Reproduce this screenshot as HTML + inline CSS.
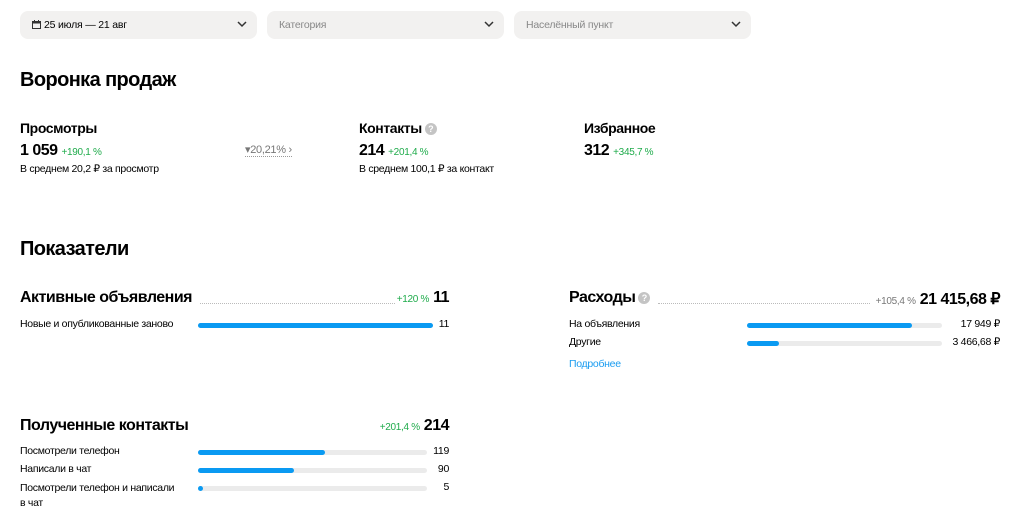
<!DOCTYPE html>
<html><head><meta charset="utf-8"><style>
body{margin:0;width:1010px;height:516px;background:#fff;position:relative;overflow:hidden;font-family:"Liberation Sans Narrow","Liberation Sans",sans-serif;color:#000}
.a{position:absolute;white-space:nowrap}
.dd{position:absolute;top:11px;height:28px;width:237px;background:#f2f1f0;border-radius:8px;font-size:10.5px;line-height:28px;letter-spacing:-0.2px}
.dd span{position:absolute;left:12px}
.dd svg.c{position:absolute;right:10px;top:10px}
.h1{font-size:20px;font-weight:bold;letter-spacing:-0.6px}
.h3{font-size:14px;font-weight:bold;letter-spacing:-0.4px}
.big{font-size:16px;font-weight:bold;letter-spacing:-0.5px}
.g{color:#1fab4b;font-size:10px;font-weight:normal;letter-spacing:-0.3px}
.s{font-size:10.5px;letter-spacing:-0.3px}
.bar{position:absolute;height:5px;background:#ebebeb;border-radius:3px}
.bar i{position:absolute;left:0;top:0;height:5px;background:#0a9af2;border-radius:3px}
.dot{position:absolute;border-bottom:1px dotted #bbb;height:0}
.q{display:inline-block;width:12px;height:12px;border-radius:50%;background:#c4c4c4;color:#fff;font-size:9px;text-align:center;line-height:12px;vertical-align:1px;margin-left:3px;letter-spacing:0}
.r{text-align:right}
</style></head><body>
<div class="dd" style="left:20px"><span><svg width="9" height="9" viewBox="0 0 9 9" style="vertical-align:-1px;margin-right:3px"><rect x="0.5" y="1.5" width="8" height="7" fill="none" stroke="#333"/><rect x="0.5" y="1.5" width="8" height="2" fill="#333"/><path d="M2.5 0v2M6.5 0v2" stroke="#333"/></svg>25 июля — 21 авг</span><svg class="c" width="10" height="7" viewBox="0 0 10 7"><path d="M1 1l4 4 4-4" fill="none" stroke="#333" stroke-width="1.5"/></svg></div>
<div class="dd" style="left:267px;color:#888"><span>Категория</span><svg class="c" width="10" height="7" viewBox="0 0 10 7"><path d="M1 1l4 4 4-4" fill="none" stroke="#333" stroke-width="1.5"/></svg></div>
<div class="dd" style="left:514px;color:#888"><span>Населённый пункт</span><svg class="c" width="10" height="7" viewBox="0 0 10 7"><path d="M1 1l4 4 4-4" fill="none" stroke="#333" stroke-width="1.5"/></svg></div>

<div class="a h1" style="left:20px;top:69px">Воронка продаж</div>

<div class="a h3" style="left:20px;top:120px">Просмотры</div>
<div class="a big" style="left:20px;top:142px">1 059 <span class="g">+190,1 %</span></div>
<div class="a s" style="left:20px;top:163px">В среднем 20,2 ₽ за просмотр</div>
<div class="a" style="left:245px;top:143px;font-size:11px;color:#777;border-bottom:1px dotted #999;letter-spacing:-0.3px">▾20,21% ›</div>

<div class="a h3" style="left:359px;top:120px">Контакты<span class="q">?</span></div>
<div class="a big" style="left:359px;top:142px">214 <span class="g">+201,4 %</span></div>
<div class="a s" style="left:359px;top:163px">В среднем 100,1 ₽ за контакт</div>

<div class="a h3" style="left:584px;top:120px">Избранное</div>
<div class="a big" style="left:584px;top:142px">312 <span class="g">+345,7 %</span></div>

<div class="a h1" style="left:20px;top:238px">Показатели</div>

<div class="a big" style="left:20px;top:289px">Активные объявления</div>
<div class="dot" style="left:200px;width:195px;top:303px"></div>
<div class="a big r" style="right:561px;top:289px"><span class="g">+120 %</span> 11</div>
<div class="a s" style="left:20px;top:318px">Новые и опубликованные заново</div>
<div class="bar" style="left:198px;top:323px;width:235px"><i style="width:235px"></i></div>
<div class="a s r" style="right:561px;top:318px">11</div>

<div class="a big" style="left:569px;top:289px">Расходы<span class="q">?</span></div>
<div class="dot" style="left:658px;width:212px;top:303px"></div>
<div class="a big r" style="right:10px;top:289px"><span class="g" style="color:#777">+105,4 %</span> 21 415,68 ₽</div>
<div class="a s" style="left:569px;top:318px">На объявления</div>
<div class="bar" style="left:747px;top:323px;width:195px"><i style="width:165px"></i></div>
<div class="a s r" style="right:10px;top:318px">17 949 ₽</div>
<div class="a s" style="left:569px;top:336px">Другие</div>
<div class="bar" style="left:747px;top:341px;width:195px"><i style="width:32px"></i></div>
<div class="a s r" style="right:10px;top:336px">3 466,68 ₽</div>
<div class="a s" style="left:569px;top:358px;color:#1a9cf0">Подробнее</div>

<div class="a big" style="left:20px;top:417px">Полученные контакты</div>
<div class="a big r" style="right:561px;top:417px"><span class="g">+201,4 %</span> 214</div>
<div class="a s" style="left:20px;top:445px">Посмотрели телефон</div>
<div class="bar" style="left:198px;top:450px;width:229px"><i style="width:127px"></i></div>
<div class="a s r" style="right:561px;top:445px">119</div>
<div class="a s" style="left:20px;top:463px">Написали в чат</div>
<div class="bar" style="left:198px;top:468px;width:229px"><i style="width:96px"></i></div>
<div class="a s r" style="right:561px;top:463px">90</div>
<div class="a s" style="left:20px;top:481px;line-height:15px">Посмотрели телефон и написали<br>в чат</div>
<div class="bar" style="left:198px;top:486px;width:229px"><i style="width:5px"></i></div>
<div class="a s r" style="right:561px;top:481px">5</div>
</body></html>
